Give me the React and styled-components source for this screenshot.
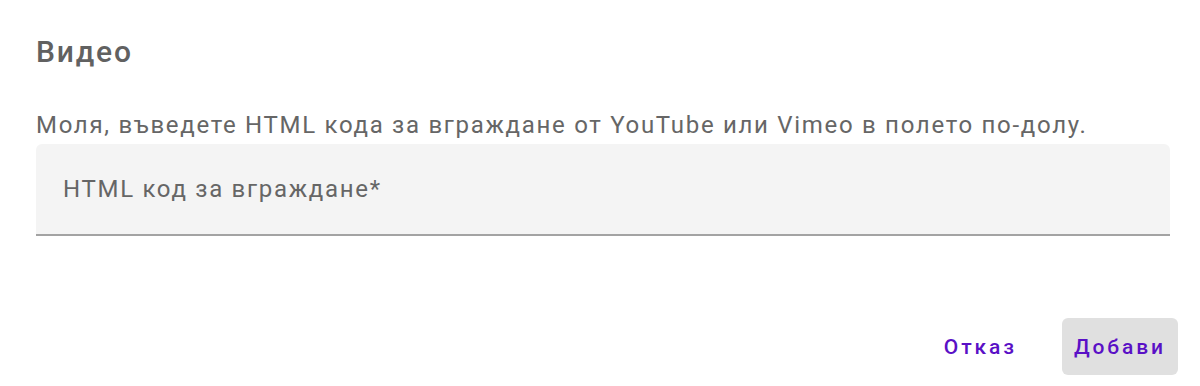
import React from 'react';
import styled, { createGlobalStyle } from 'styled-components';

const GlobalStyle = createGlobalStyle`
  body {
    margin: 0;
    background: #fff;
    font-family: Roboto, "Noto Sans", sans-serif;
  }
`;

const Dialog = styled.div`
  width: 1200px;
  height: 386px;
  display: flex;
  flex-direction: column;
  background: #fff;
  box-sizing: border-box;
`;

const Title = styled.h2`
  margin: 0;
  padding: 28px 36px 0;
  font-size: 30px;
  line-height: 48px;
  font-weight: 500;
  letter-spacing: 1.8px;
  color: #616161;
`;

const Content = styled.div`
  padding: 31px 30px 0 36px;
  display: flex;
  flex-direction: column;
`;

const Hint = styled.p`
  margin: 0;
  font-size: 24px;
  line-height: 36px;
  letter-spacing: 1.7px;
  color: #666;
`;

const Field = styled.label`
  margin-top: 1px;
  height: 90px;
  display: flex;
  align-items: center;
  padding-left: 27px;
  background: #f4f4f4;
  border-bottom: 2px solid #a3a3a3;
  border-radius: 6px 6px 0 0;
  font-size: 24px;
  line-height: 36px;
  letter-spacing: 1.7px;
  color: #666;
`;

const Actions = styled.div`
  display: flex;
  justify-content: flex-end;
  align-items: center;
  gap: 33px;
  padding: 82px 22px 0 0;
`;

const Button = styled.button`
  min-width: 96px;
  height: 57px;
  padding: 0 12px;
  border: none;
  border-radius: 6px;
  background: ${(p) => (p.$filled ? '#e0e0e0' : 'transparent')};
  color: #5a10c6;
  font-family: Roboto, "Noto Sans", sans-serif;
  font-size: 21px;
  font-weight: 500;
  letter-spacing: 2.9px;
  cursor: pointer;
`;

export default function App() {
  return (
    <>
      <GlobalStyle />
      <Dialog>
        <Title>Видео</Title>
        <Content>
          <Hint>Моля, въведете HTML кода за вграждане от YouTube или Vimeo в полето по-долу.</Hint>
          <Field>HTML код за вграждане*</Field>
        </Content>
        <Actions>
          <Button>Отказ</Button>
          <Button $filled>Добави</Button>
        </Actions>
      </Dialog>
    </>
  );
}
